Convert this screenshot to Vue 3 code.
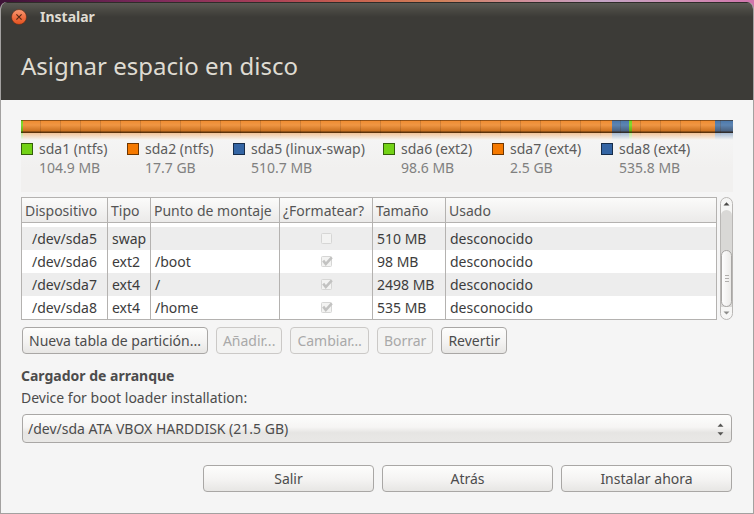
<script setup>
import { ref } from 'vue'

const segments = [
  { id: 'sda1', share: 2, tone: 'green' },
  { id: 'sda2', share: 589, tone: 'orange' },
  { id: 'sda5', share: 17, tone: 'blue' },
  { id: 'sda6', share: 3, tone: 'green' },
  { id: 'sda7', share: 83, tone: 'orange' },
  { id: 'sda8', share: 18, tone: 'blue' },
]

const legend = [
  { name: 'sda1 (ntfs)', size: '104.9 MB', tone: 'green' },
  { name: 'sda2 (ntfs)', size: '17.7 GB', tone: 'orange' },
  { name: 'sda5 (linux-swap)', size: '510.7 MB', tone: 'blue' },
  { name: 'sda6 (ext2)', size: '98.6 MB', tone: 'green' },
  { name: 'sda7 (ext4)', size: '2.5 GB', tone: 'orange' },
  { name: 'sda8 (ext4)', size: '535.8 MB', tone: 'blue' },
]

const columns = ['Dispositivo', 'Tipo', 'Punto de montaje', '¿Formatear?', 'Tamaño', 'Usado']

const rows = [
  { device: '/dev/sda5', type: 'swap', mount: '', format: false, size: '510 MB', used: 'desconocido' },
  { device: '/dev/sda6', type: 'ext2', mount: '/boot', format: true, size: '98 MB', used: 'desconocido' },
  { device: '/dev/sda7', type: 'ext4', mount: '/', format: true, size: '2498 MB', used: 'desconocido' },
  { device: '/dev/sda8', type: 'ext4', mount: '/home', format: true, size: '535 MB', used: 'desconocido' },
]

const actions = [
  { label: 'Nueva tabla de partición...', enabled: true },
  { label: 'Añadir...', enabled: false },
  { label: 'Cambiar…', enabled: false },
  { label: 'Borrar', enabled: false },
  { label: 'Revertir', enabled: true },
]

const bootDevice = ref('/dev/sda ATA VBOX HARDDISK (21.5 GB)')
const viewport = ref(null)

function scrollRows(step) {
  viewport.value.scrollTop += step
}
</script>

<template>
  <div class="desktop">
    <div class="window">
      <header class="head">
        <div class="titlebar">
          <button class="close" type="button" aria-label="Cerrar">
            <svg viewBox="0 0 16 16" width="16" height="16" aria-hidden="true">
              <defs>
                <linearGradient id="close-fill" x1="0" y1="0" x2="0" y2="1">
                  <stop offset="0" stop-color="#f79a74" />
                  <stop offset="0.5" stop-color="#f07044" />
                  <stop offset="1" stop-color="#e2521f" />
                </linearGradient>
              </defs>
              <circle cx="8" cy="8" r="7.5" fill="url(#close-fill)" stroke="#5c2b18" stroke-width="0.6" />
              <path d="M5.4 5.4 10.6 10.6M10.6 5.4 5.4 10.6" stroke="#5a2a15" stroke-width="1.2" fill="none" />
            </svg>
          </button>
          <span class="caption">Instalar</span>
        </div>
        <h1>Asignar espacio en disco</h1>
      </header>

      <main class="body">
        <section class="disk">
          <div class="bar">
            <span v-for="s in segments" :key="s.id" :class="['segment', s.tone]" :style="{ flexGrow: s.share }"></span>
          </div>
          <ul class="legend">
            <li v-for="l in legend" :key="l.name">
              <i :class="['swatch', l.tone]"></i>
              <span class="name">{{ l.name }}</span>
              <span class="size">{{ l.size }}</span>
            </li>
          </ul>
        </section>

        <section class="partitions">
          <div ref="viewport" class="viewport">
            <table>
              <colgroup>
                <col class="c-device" />
                <col class="c-type" />
                <col class="c-mount" />
                <col class="c-format" />
                <col class="c-size" />
                <col />
              </colgroup>
              <thead>
                <tr>
                  <th v-for="c in columns" :key="c" scope="col">{{ c }}</th>
                </tr>
              </thead>
              <tbody>
                <tr class="lead" aria-hidden="true">
                  <td v-for="c in columns" :key="c"></td>
                </tr>
                <tr v-for="r in rows" :key="r.device">
                  <td class="device">{{ r.device }}</td>
                  <td>{{ r.type }}</td>
                  <td>{{ r.mount }}</td>
                  <td class="format">
                    <label class="check">
                      <input type="checkbox" :checked="r.format" :aria-label="r.device" disabled />
                      <svg viewBox="0 0 14 13" width="14" height="13" aria-hidden="true">
                        <rect x="1.5" y="1.5" width="10" height="10" rx="1" fill="#f3f3f2" stroke="#d6d6d5" />
                        <path v-if="r.format" d="M3.2 5.6 5.8 9 11.8 2.4" fill="none" stroke="#c2c2c1" stroke-width="2.6" />
                      </svg>
                    </label>
                  </td>
                  <td>{{ r.size }}</td>
                  <td>{{ r.used }}</td>
                </tr>
              </tbody>
            </table>
          </div>
          <div class="scrollbar">
            <button type="button" aria-label="Subir" @click="scrollRows(-23)">
              <svg viewBox="0 0 7 4" width="7" height="4" aria-hidden="true"><path d="M0.5 3.5 3.5 0.2 6.5 3.5Z" fill="#4b4b49" /></svg>
            </button>
            <div class="trough">
              <div class="thumb"><i></i><i></i><i></i></div>
            </div>
            <button type="button" aria-label="Bajar" @click="scrollRows(23)">
              <svg viewBox="0 0 7 4" width="7" height="4" aria-hidden="true"><path d="M0.5 0.5 3.5 3.6 6.5 0.5Z" fill="#8c8c8a" /></svg>
            </button>
          </div>
        </section>

        <div class="actions">
          <button v-for="a in actions" :key="a.label" class="btn" type="button" :disabled="!a.enabled">{{ a.label }}</button>
        </div>

        <section class="boot">
          <h2>Cargador de arranque</h2>
          <label for="boot-device">Device for boot loader installation:</label>
          <div class="picker">
            <select id="boot-device" v-model="bootDevice">
              <option>/dev/sda ATA VBOX HARDDISK (21.5 GB)</option>
            </select>
            <svg class="arrows" viewBox="0 0 7 13" width="7" height="13" aria-hidden="true">
              <path d="M0.5 3.8 3.5 0.4 6.5 3.8ZM0.5 9.2 3.5 12.6 6.5 9.2Z" fill="#555553" />
            </svg>
          </div>
        </section>

        <footer class="nav">
          <button class="btn" type="button">Salir</button>
          <button class="btn" type="button">Atrás</button>
          <button class="btn" type="button">Instalar ahora</button>
        </footer>
      </main>
    </div>
  </div>
</template>

<style>
body {
  margin: 0;
  background: #a9a5a2;
}
</style>

<style scoped>
* {
  box-sizing: border-box;
}

.desktop {
  display: flex;
  min-height: 100vh;
  padding-top: 2px;
  background: linear-gradient(90deg, #3d1236 0%, #7c2a5c 20%, #a83f58 35%, #c8604f 46%, #d08058 58%, #cf8f9c 70%, #c3a3c4 80%, #cf92b4 90%, #d074ac 100%);
  font-family: "Noto Sans", "Open Sans", sans-serif;
  font-size: 14px;
  line-height: 20px;
  color: #4c4c4c;
}

.window {
  display: flex;
  flex: 1;
  flex-direction: column;
  border: 1px solid #a3a1a0;
  border-top: 0;
  border-radius: 7px 7px 0 0;
  background: #f5f5f5;
  overflow: hidden;
}

.head {
  height: 98px;
  background: linear-gradient(#2e2c29 0 1px, #5a5953 1px, #4a4943 8px, #3c3b37 15px);
  color: #dfdbd2;
}

.titlebar {
  display: flex;
  align-items: center;
  gap: 13px;
  height: 29px;
  padding-left: 10px;
}

.close {
  display: flex;
  padding: 0;
  border: 0;
  background: none;
}

.caption {
  font-weight: 700;
}

h1 {
  margin: 17px 0 0;
  padding-left: 20px;
  font-size: 24px;
  font-weight: 400;
  line-height: 36px;
}

.body {
  flex: 1;
  padding: 20px;
}

.disk {
  height: 72px;
  background: linear-gradient(#f5f5f5 16px, #f1f0ef 48px);
}

.bar {
  position: relative;
  display: flex;
  height: 20px;
}

.bar::after {
  content: "";
  position: absolute;
  inset: 0;
  background:
    linear-gradient(rgba(60, 30, 0, 0.5) 0 1px, rgba(255, 255, 255, 0.04) 1px, rgba(255, 255, 255, 0.12) 5px, rgba(90, 40, 0, 0.24) 11px, rgba(40, 20, 0, 0.74) 12px 13px, rgba(245, 244, 243, 0.55) 13px, #f5f5f4 20px),
    repeating-linear-gradient(90deg, transparent 0 19px, rgba(90, 50, 20, 0.24) 19px 20px);
  background-size: 100% 100%, 100% 16px;
  background-repeat: no-repeat;
}

.segment {
  flex-basis: 0;
}

.green {
  background: #73d216;
}

.orange {
  background: #f57900;
}

.blue {
  background: #3465a4;
}

.bar .orange {
  background: #ee882a;
}

.bar .blue {
  background: #4674a8;
}

.legend {
  display: grid;
  grid-template-columns: 106px 106px 150px 109px 109px 1fr;
  margin: 0;
  padding: 0;
  list-style: none;
}

.legend li {
  display: grid;
  grid-template-columns: 12px 1fr;
  column-gap: 6px;
  align-items: center;
  white-space: nowrap;
}

.swatch {
  width: 12px;
  height: 12px;
  border: 1px solid rgba(0, 0, 0, 0.55);
}

.name {
  line-height: 18px;
  color: #5c5c5c;
}

.size {
  grid-column: 2;
  line-height: 20px;
  color: #808080;
}

.partitions {
  display: flex;
  gap: 3px;
  margin-top: 5px;
}

.viewport {
  flex: 1;
  height: 123px;
  border: 1px solid #b4b2b0;
  background: #fff;
  overflow: auto;
  scrollbar-width: none;
}

table {
  width: 100%;
  table-layout: fixed;
  border-spacing: 0;
}

.c-device {
  width: 86px;
}

.c-type {
  width: 43px;
}

.c-mount {
  width: 129px;
}

.c-format {
  width: 93px;
}

.c-size {
  width: 73px;
}

th {
  position: sticky;
  top: 0;
  z-index: 1;
  height: 25px;
  padding: 1px 0 0 3px;
  border-bottom: 1px solid #b4b2b0;
  background: linear-gradient(#fbfbfa, #ebeae9);
  font-weight: 400;
  text-align: left;
  white-space: nowrap;
  color: #555;
}

td {
  height: 23px;
  padding: 0 0 0 4px;
  white-space: nowrap;
  color: #3c3c3c;
}

.lead td {
  height: 4px;
  padding: 0;
}

th:not(:last-child),
td:not(:last-child) {
  border-right: 1px solid #b4b2b0;
}

.device {
  padding-left: 10px;
}

tbody tr:nth-child(even) {
  background: #ededed;
}

.format {
  padding: 0 0 0 2px;
}

.check {
  display: flex;
  justify-content: center;
}

.check input {
  appearance: none;
  width: 0;
  height: 0;
  margin: 0;
}

.scrollbar {
  display: flex;
  flex-direction: column;
  width: 13px;
  border: 1px solid #b9b7b5;
  border-radius: 7px;
  background: #f6f6f5;
  overflow: hidden;
}

.scrollbar button {
  display: flex;
  flex: none;
  align-items: center;
  justify-content: center;
  height: 12px;
  padding: 0;
  border: 0;
  background: none;
}

.trough {
  display: flex;
  flex: 1;
  align-items: flex-end;
  border-radius: 6px 6px 0 0;
  background: #d9d8d6;
}

.thumb {
  display: flex;
  flex: 1;
  flex-direction: column;
  align-items: center;
  justify-content: center;
  gap: 2px;
  height: 57px;
  border: 1px solid #a8a6a4;
  border-radius: 6px;
  background: linear-gradient(90deg, #fdfdfd, #ebeae8);
}

.thumb i {
  width: 4px;
  height: 1px;
  background: #b0aeac;
}

.actions {
  display: flex;
  gap: 8px;
  margin: 7px 1px 0;
}

.btn {
  height: 27px;
  padding: 0 5px;
  border: 1px solid #a9a7a5;
  border-radius: 4px;
  background: linear-gradient(#fdfdfc, #f4f3f2 55%, #e7e6e4);
  font: inherit;
  line-height: 20px;
  color: #4c4c4c;
  white-space: nowrap;
}

.actions .btn {
  padding: 0 6px;
}

.btn:disabled {
  border-color: #cbc9c7;
  background: #f3f3f2;
  color: #a9a9a9;
}

.boot {
  margin-top: 11px;
}

h2 {
  margin: 0;
  font-size: 14px;
  font-weight: 700;
  line-height: 22px;
}

.boot label {
  display: block;
  line-height: 22px;
}

.picker {
  position: relative;
  margin: 5px 1px 0;
}

select {
  display: block;
  width: 100%;
  height: 29px;
  padding: 0 5px;
  border: 1px solid #a9a7a5;
  border-radius: 4px;
  appearance: none;
  background: linear-gradient(#fdfdfc, #f6f5f4 45%, #e6e5e3 65%, #e9e8e6);
  font: inherit;
  color: #4c4c4c;
}

.arrows {
  position: absolute;
  top: 9px;
  right: 8px;
  pointer-events: none;
}

.nav {
  display: flex;
  justify-content: flex-end;
  gap: 8px;
  margin: 22px 1px 0;
}

.nav .btn {
  width: 171px;
}
</style>
